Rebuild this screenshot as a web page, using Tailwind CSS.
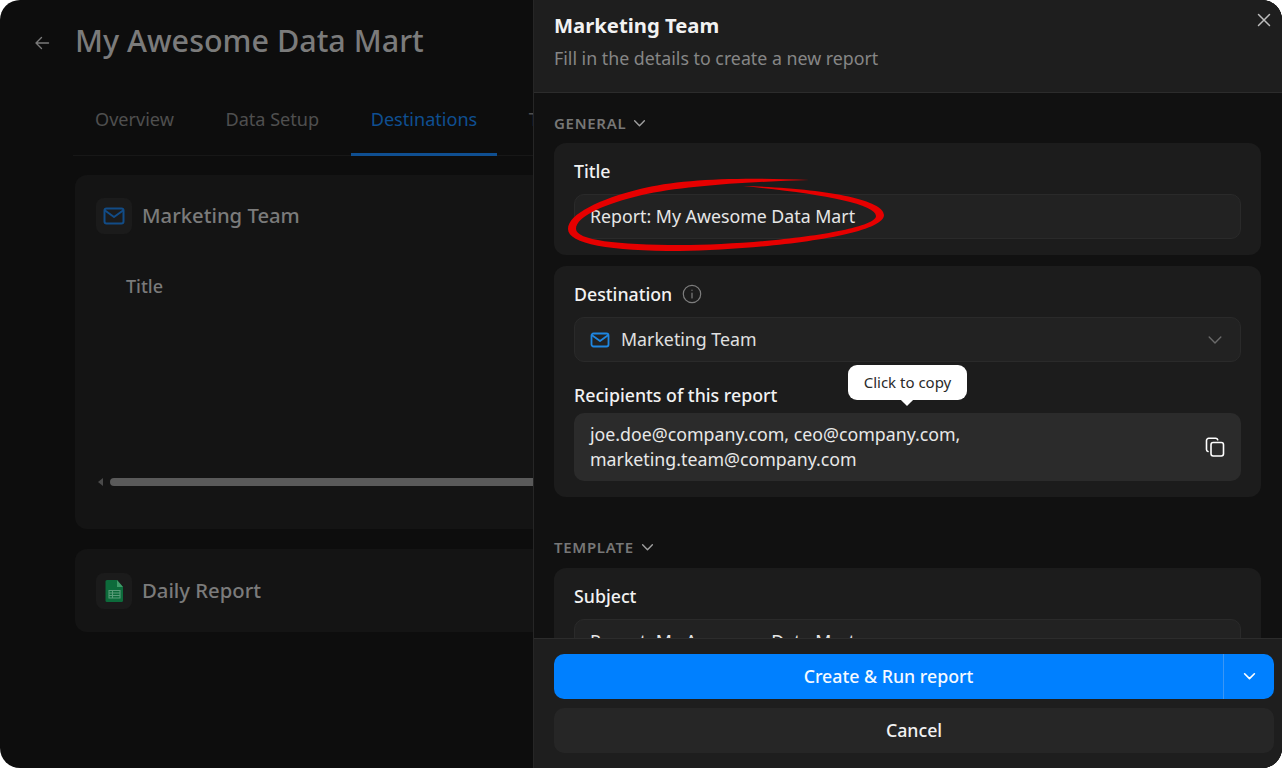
<!DOCTYPE html>
<html lang="en">
  <head>
    <meta charset="UTF-8" />
    <title>Create report</title>
    <script src="https://cdn.jsdelivr.net/npm/@tailwindcss/browser@4"></script>
  </head>
  <body class="bg-white overflow-hidden">
    <div class="relative w-[1282px] h-[768px] rounded-[20px] overflow-hidden flex bg-[#0d0d0d] font-['Noto_Sans',sans-serif]">
      <!-- Dimmed page behind the sheet -->
      <div class="w-[533px] shrink-0 overflow-hidden">
        <div class="flex items-center h-[82px] pl-[34px] gap-[25px]">
          <svg class="w-4 h-4 mt-[3px] text-[#7a7a7a]" viewBox="0 0 16 16" fill="none" stroke="currentColor" stroke-width="1.4" stroke-linecap="round" stroke-linejoin="round"><path d="M14.5 8H2M7.5 2.5 2 8l5.5 5.5" /></svg>
          <h1 class="-mt-[2px] text-[30.5px] leading-10 font-medium text-[#7b7b7b] whitespace-nowrap">My Awesome Data Mart</h1>
        </div>
        <div class="ml-[73px] w-[600px] h-[74px] border-b border-[#171717] flex gap-[11.5px] pl-[2px] text-[18.1px] text-[#4f4f4f] whitespace-nowrap">
          <div class="px-5 pt-[24px]">Overview</div>
          <div class="px-5 pt-[24px]">Data Setup</div>
          <div class="px-5 pt-[24px] h-[74px] text-[#0f4f91] border-b-[3px] border-[#0f4f91]">Destinations</div>
          <div class="px-5 pt-[24px]">Triggers</div>
        </div>
        <div class="ml-[75px] mt-[19px] w-[600px] h-[354px] rounded-xl bg-[#141414] pt-[23px] pl-[21px]">
          <div class="flex items-center gap-[10px]">
            <div class="w-9 h-9 rounded-lg bg-[#1b1b1b] flex items-center justify-center">
              <svg class="w-6 h-6 text-[#124c87]" viewBox="0 0 24 24" fill="none" stroke="currentColor" stroke-width="2" stroke-linejoin="round" stroke-linecap="round"><rect x="2.5" y="4.5" width="19" height="15" rx="2" /><path d="m3 6.5 9 6.5 9-6.5" /></svg>
            </div>
            <span class="-mt-[2px] text-[20.25px] font-medium text-[#7b7b7b]">Marketing Team</span>
          </div>
          <div class="ml-[30px] mt-[40px] text-[18px] leading-6 font-medium text-[#7a7a7a]">Title</div>
          <div class="mt-[180px] flex items-center gap-[6px] h-[8px]">
            <div class="w-[8px] h-[8px] flex items-center justify-center">
              <div class="w-0 h-0 border-y-[4px] border-y-transparent border-r-[5px] border-r-[#4a4a4a]"></div>
            </div>
            <div class="w-[500px] h-[8px] rounded-full bg-[#5a5a5a]"></div>
          </div>
        </div>
        <div class="ml-[75px] mt-[20px] w-[600px] h-[83px] rounded-xl bg-[#141414] pl-[21px] flex items-center gap-[10px]">
          <div class="w-9 h-9 rounded-lg bg-[#1b1b1b] flex items-center justify-center">
            <svg class="w-6 h-6" viewBox="0 0 24 24"><path d="M5 1h10l6 7v13.500a1.500 1.500 0 0 1-1.500 1.500h-14.500a1.500 1.500 0 0 1-1.500-1.500v-19a1.500 1.500 0 0 1 1.500-1.500z" fill="#0d6b3b" /><path d="M15 1l6 7h-6z" fill="#3f9a68" /><path d="M7 11.500h11v7.500h-11zM7 14h11M7 16.500h11M10.500 11.500v7.500" fill="none" stroke="#5a9c79" stroke-width="1.100" /></svg>
          </div>
          <span class="text-[20.25px] font-medium text-[#7b7b7b]">Daily Report</span>
        </div>
      </div>

      <!-- Sheet -->
      <div class="relative flex-1 flex flex-col bg-[#111111] border-l border-[#262626] text-white">
        <div class="h-[93px] shrink-0 bg-[#1e1e1e] border-b border-[#2c2c2c] pl-[20px] pt-[10px]">
          <h2 class="text-[20.25px] leading-[30px] font-bold text-[#f2f2f2]">Marketing Team</h2>
          <p class="mt-[4px] text-[17.8px] leading-[28px] text-[#868686]">Fill in the details to create a new report</p>
          <svg class="absolute top-[13px] right-[11px] w-[14px] h-[14px] text-[#bdbdbd]" viewBox="0 0 14 14" fill="none" stroke="currentColor" stroke-width="1.500" stroke-linecap="round"><path d="m1.500 1.500 11 11M12.500 1.500l-11 11" /></svg>
        </div>

        <div class="flex-1 overflow-hidden pl-[20px] pr-[21px]">
          <div class="flex items-center gap-[7px] h-[20px] mt-[20px] text-[15px] font-semibold tracking-[0.7px] text-[#777777]">
            <span>GENERAL</span>
            <svg class="w-[13px] h-[13px] text-[#a0a0a0]" viewBox="0 0 12 12" fill="none" stroke="currentColor" stroke-width="1.300" stroke-linecap="round" stroke-linejoin="round"><path d="m1.500 3.500 4.500 4.500 4.500-4.500" /></svg>
          </div>
          <section class="mt-[10px] h-[112px] rounded-xl bg-[#1c1c1c] px-5 pt-[16px]">
            <label class="block text-[17.75px] leading-6 font-medium text-[#f2f2f2]">Title</label>
            <div class="mt-[11px] h-[45px] rounded-[10px] bg-[#222222] border border-[#2a2a2a] flex items-center px-[15px] text-[17.75px] text-[#e6e6e6]">Report: My Awesome Data Mart</div>
          </section>
          <section class="mt-[11px] h-[231px] rounded-xl bg-[#1c1c1c] px-5 pt-[16px]">
            <div class="flex items-center gap-[10px]">
              <label class="text-[17.75px] leading-6 font-medium text-[#f2f2f2]">Destination</label>
              <svg class="w-[20px] h-[20px] text-[#7d7d7d]" viewBox="0 0 20 20" fill="none" stroke="currentColor" stroke-width="1.200" stroke-linecap="round"><circle cx="10" cy="10" r="8.700" /><path d="M10 9.200v4.800M10 6.200v.1" /></svg>
            </div>
            <div class="mt-[11px] h-[45px] rounded-[10px] bg-[#222222] border border-[#2a2a2a] flex items-center pl-[15px] pr-[18px] text-[17.75px] text-[#e0e0e0]">
              <svg class="w-[20px] h-[20px] text-[#1f86e0] mr-[11px]" viewBox="0 0 20 20" fill="none" stroke="currentColor" stroke-width="1.800" stroke-linejoin="round" stroke-linecap="round"><rect x="1.500" y="3.500" width="17" height="13" rx="2" /><path d="m2 5.200 8 5.800 8-5.800" /></svg>
              <span>Marketing Team</span>
              <svg class="ml-auto w-[14px] h-[14px] text-[#6a6a6a]" viewBox="0 0 12 12" fill="none" stroke="currentColor" stroke-width="1.200" stroke-linecap="round" stroke-linejoin="round"><path d="m1 3.500 5 5 5-5" /></svg>
            </div>
            <label class="block mt-[21px] text-[17.75px] leading-6 font-medium text-[#f2f2f2]">Recipients of this report</label>
            <div class="mt-[6px] h-[68px] rounded-[10px] bg-[#2b2b2b] flex items-center justify-between pl-[16px] pr-[16px] text-[17.75px] leading-[25px] text-[#e8e8e8]">
              <div>joe.doe@company.com, ceo@company.com,<br />marketing.team@company.com</div>
              <svg class="w-[20px] h-[20px] text-white" viewBox="0 0 20 20" fill="none" stroke="currentColor" stroke-width="1.600" stroke-linejoin="round" stroke-linecap="round"><rect x="6" y="5.500" width="12.500" height="13.500" rx="2.200" /><path d="M3 14.500a2 2 0 0 1-1.500-2V3.500a2.200 2.200 0 0 1 2.200-2.200h7a2.200 2.200 0 0 1 2 1.500" /></svg>
            </div>
          </section>
          <div class="flex items-center gap-[7px] h-[20px] mt-[40px] text-[15px] font-semibold tracking-[0.7px] text-[#777777]">
            <span>TEMPLATE</span>
            <svg class="w-[13px] h-[13px] text-[#a0a0a0]" viewBox="0 0 12 12" fill="none" stroke="currentColor" stroke-width="1.300" stroke-linecap="round" stroke-linejoin="round"><path d="m1.500 3.500 4.500 4.500 4.500-4.500" /></svg>
          </div>
          <section class="mt-[11px] h-[112px] rounded-xl bg-[#1c1c1c] px-5 pt-[16px]">
            <label class="block text-[17.75px] leading-6 font-medium text-[#f2f2f2]">Subject</label>
            <div class="mt-[11px] h-[45px] rounded-[10px] bg-[#222222] border border-[#2a2a2a] flex items-center px-[15px] text-[17.75px] text-[#e6e6e6]">Report: My Awesome Data Mart</div>
          </section>
        </div>

        <div class="h-[130px] shrink-0 bg-[#1e1e1e] border-t border-[#2c2c2c] pl-[20px] pr-[8px] pt-[15px] flex flex-col gap-[9px]">
          <div class="h-[45px] rounded-[10px] bg-[#0080ff] flex text-[17.75px] font-medium text-[#f5f9ff]">
            <div class="flex-1 flex items-center justify-center">Create &amp; Run report</div>
            <div class="w-[51px] border-l border-[#3a96f5] flex items-center justify-center">
              <svg class="w-[13px] h-[13px] text-white" viewBox="0 0 12 12" fill="none" stroke="currentColor" stroke-width="1.500" stroke-linecap="round" stroke-linejoin="round"><path d="m1.500 3.500 4.500 4.500 4.500-4.500" /></svg>
            </div>
          </div>
          <div class="h-[45px] rounded-[10px] bg-[#262626] flex items-center justify-center text-[17.75px] font-medium text-[#f2f2f2]">Cancel</div>
        </div>

        <!-- Tooltip over the recipients field -->
        <div class="absolute left-[314px] top-[365px] w-[119px] h-[35px] rounded-[9px] bg-white text-[#2a2a2a] text-[15px] flex items-center justify-center">
          <span>Click to copy</span>
          <div class="absolute left-[54px] -bottom-[4px] w-[10px] h-[10px] rotate-45 bg-white"></div>
        </div>
      </div>

      <!-- Hand-drawn annotation -->
      <svg class="absolute inset-0 pointer-events-none" width="1282" height="768" viewBox="0 0 1282 768">
        <path fill="#e60000" d="M809 180C740 177 680 179 640 189C600 199 568 214 568 229C568 244 610 251 680 251C760 250 884 236 884 215C884 199 820 188 743 186C815 193 876 203 876 216C876 231 760 245 680 245C617 245 576 240 576 229C576 216 605 204 642 195C682 186 745 182 809 180Z" />
      </svg>
    </div>
  </body>
</html>
